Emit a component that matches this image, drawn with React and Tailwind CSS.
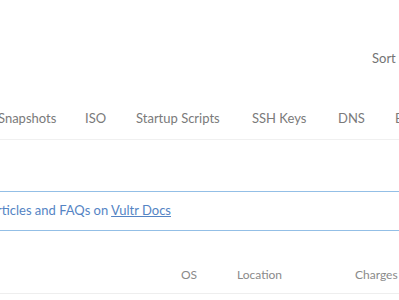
import React from 'react';

const tabs = [
  { label: 'Snapshots', w: 'w-[87px]' },
  { label: 'ISO', w: 'w-[51px]' },
  { label: 'Startup Scripts', w: 'w-[116px]' },
  { label: 'SSH Keys', w: 'w-[86px]' },
  { label: 'DNS', w: 'w-[57px]' },
  { label: 'Block Storage', w: 'w-[110px]' },
];

export default function App() {
  return (
    <div className="w-[399px] h-[300px] overflow-hidden bg-white font-['Lato','Open_Sans',sans-serif]">
      {/* Toolbar */}
      <div className="h-[100px] flex items-start justify-end pt-[49px]">
        <span className="text-[13px] leading-[18px] text-[#737373] whitespace-nowrap -mr-[20px] w-[47px]">Sort</span>
      </div>

      {/* Tabs */}
      <div className="h-[40px] border-b border-[#f0f0f0] flex items-start pt-[9px] -ml-[2px] whitespace-nowrap">
        {tabs.map((t) => (
          <span key={t.label} className={`${t.w} shrink-0 text-[13px] leading-[18px] text-[#7a7a7a]`}>
            {t.label}
          </span>
        ))}
      </div>

      {/* Docs notice */}
      <div className="mt-[51px] h-[40px] border-y border-[#93bfe6] flex items-center">
        <div className="w-[171px] shrink-0 flex justify-end whitespace-nowrap">
          <span className="text-[13px] text-[#5484c4]">
            Find helpful articles and FAQs on{' '}
            <a href="#" className="underline text-[#5484c4]">Vultr Docs</a>
          </span>
        </div>
      </div>

      {/* Table header */}
      <div className="mt-[34px] h-[29px] border-b border-[#eeeeee] flex items-start pt-[2px] whitespace-nowrap text-[12px] leading-[16px] text-[#8a8a8a]">
        <span className="w-[181px] shrink-0" />
        <span className="w-[56px] shrink-0">OS</span>
        <span className="w-[118px] shrink-0">Location</span>
        <span className="shrink-0">Charges</span>
      </div>
    </div>
  );
}
